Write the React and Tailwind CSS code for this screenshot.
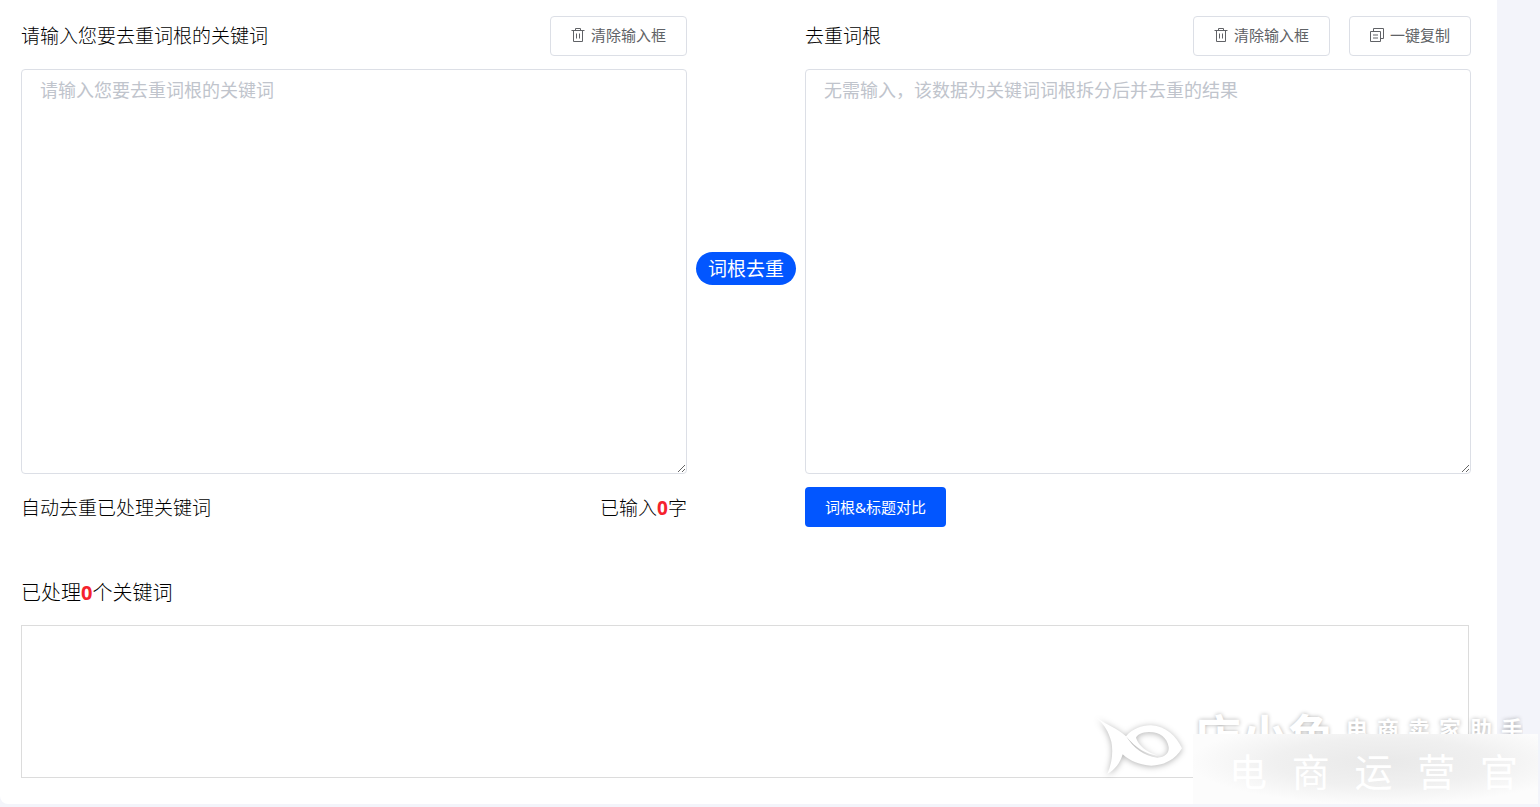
import { useState } from 'react';

const inputHint = '请输入您要去重词根的关键词';
const resultHint = '无需输入，该数据为关键词词根拆分后并去重的结果';

function TrashIcon() {
  return (
    <svg viewBox="0 0 14 14" className="h-[14px] w-[14px]" fill="none" stroke="currentColor" aria-hidden="true">
      <path d="M.5 2.5h13M4.5 2.5v-2h5v2M2.5 2.5v11h9v-11M5.5 5.5v5M8.5 5.5v5" />
    </svg>
  );
}

function CopyIcon() {
  return (
    <svg viewBox="0 0 14 14" className="h-[14px] w-[14px]" fill="none" stroke="currentColor" aria-hidden="true">
      <path d="M3.5 3V.5h10v10H11M.5 3.5h10v10H.5zM3 7h5M3 10h5" />
    </svg>
  );
}

function PlainButton({ icon, children, onClick }) {
  return (
    <button
      type="button"
      onClick={onClick}
      className="flex h-10 items-center gap-[6px] rounded border border-[#dcdfe6] bg-white px-5 pb-[2px] text-[15px] leading-5 font-normal text-[#606266]"
    >
      {icon}
      {children}
    </button>
  );
}

function Watermark() {
  return (
    <div className="pointer-events-none absolute right-0 bottom-0 h-[104px] w-[450px] overflow-hidden" aria-hidden="true">
      <svg viewBox="0 0 330 250" className="absolute top-0 left-0 w-[110px] drop-shadow-[0_1px_3px_rgba(0,0,0,0.3)]" fill="#fff">
        <path
          fillRule="evenodd"
          d="M22 46C50 66 82 76 108 100C128 76 158 66 184 67C228 70 258 98 276 136C256 170 222 187 184 188C150 187 120 174 98 154C90 180 76 200 52 213C66 180 70 146 64 116C56 88 44 66 22 46ZM108 100C130 134 162 160 202 164C228 163 238 148 236 132C232 104 208 86 176 87C156 88 142 94 138 104C146 130 172 148 204 158C168 154 138 136 108 100Z"
        />
      </svg>
      <div className="absolute top-0 left-[100px] flex h-[31px] items-start gap-[11px] overflow-hidden pl-1 whitespace-nowrap text-white [text-shadow:0_0_4px_rgba(0,0,0,0.3)]">
        <span className="pt-2 text-[47px] leading-[50px] font-bold">店小鱼</span>
        <span className="flex gap-[9px] pt-3 text-[22px] leading-[26px] font-bold">
          {['电', '商', '卖', '家', '助', '手'].map((char) => (
            <span key={char}>{char}</span>
          ))}
        </span>
      </div>
      <div className="absolute right-[2px] bottom-[3px] flex h-[70px] w-[345px] items-center justify-between bg-[#fcfcfc] bg-[radial-gradient(ellipse_at_55%_40%,#e9e9e9_0%,#f0f0f0_40%,#fcfcfc_72%)] pt-1 pr-5 pl-9 text-[38px] leading-[44px] font-normal text-white">
        {['电', '商', '运', '营', '官'].map((char) => (
          <span key={char}>{char}</span>
        ))}
      </div>
    </div>
  );
}

export default function App() {
  const [keywords, setKeywords] = useState('');
  const [roots, setRoots] = useState('');

  const areaClass =
    'block h-[405px] w-full resize rounded border border-[#dcdfe6] bg-white px-[18px] py-[6px] text-[18px] leading-[28px] font-normal placeholder:text-[#c0c4cc]';

  return (
    <div className="relative min-h-screen bg-[#f3f4fa] pr-[43px] pb-[3px] font-['Noto_Sans','Noto_Sans_CJK_SC',sans-serif] font-light text-black">
      <main className="rounded-bl-lg bg-white pt-4 pr-[26px] pb-[26px] pl-[21px]">
        <div className="flex">
          <section className="min-w-0 flex-1">
            <div className="mb-[13px] flex items-center justify-between">
              <label htmlFor="keywords" className="text-[19px] leading-[30px]">请输入您要去重词根的关键词</label>
              <PlainButton icon={<TrashIcon />} onClick={() => setKeywords('')}>清除输入框</PlainButton>
            </div>
            <textarea
              id="keywords"
              className={areaClass}
              placeholder={inputHint}
              value={keywords}
              onChange={(e) => setKeywords(e.target.value)}
            />
            <div className="mt-[13px] flex h-10 items-center justify-between pt-[2px] text-[19px] leading-7">
              <p>自动去重已处理关键词</p>
              <p>
                已输入<strong className="font-bold text-[#f5222d]">{keywords.length}</strong>字
              </p>
            </div>
          </section>

          <div className="flex w-[118px] shrink-0 items-center justify-center pb-[6px]">
            <button type="button" className="h-[33px] w-[100px] rounded-full bg-[#0256ff] text-[19px] leading-7 font-normal text-white">
              词根去重
            </button>
          </div>

          <section className="min-w-0 flex-1">
            <div className="mb-[13px] flex items-center justify-between">
              <label htmlFor="roots" className="text-[19px] leading-[30px]">去重词根</label>
              <div className="flex gap-[19px]">
                <PlainButton icon={<TrashIcon />} onClick={() => setRoots('')}>清除输入框</PlainButton>
                <PlainButton icon={<CopyIcon />} onClick={() => navigator.clipboard.writeText(roots)}>一键复制</PlainButton>
              </div>
            </div>
            <textarea
              id="roots"
              className={areaClass}
              placeholder={resultHint}
              value={roots}
              onChange={(e) => setRoots(e.target.value)}
            />
            <button type="button" className="mt-[13px] h-10 rounded bg-[#0256ff] px-5 text-[15px] leading-5 font-normal text-white">
              词根&amp;标题对比
            </button>
          </section>
        </div>

        <section className="mt-[52px]">
          <h2 className="text-[20px] leading-7">
            已处理<strong className="font-bold text-[#f5222d]">0</strong>个关键词
          </h2>
          <div className="mt-[18px] mr-[2px] h-[153px] border border-[#dcdcdc]" />
        </section>
      </main>
      <Watermark />
    </div>
  );
}
